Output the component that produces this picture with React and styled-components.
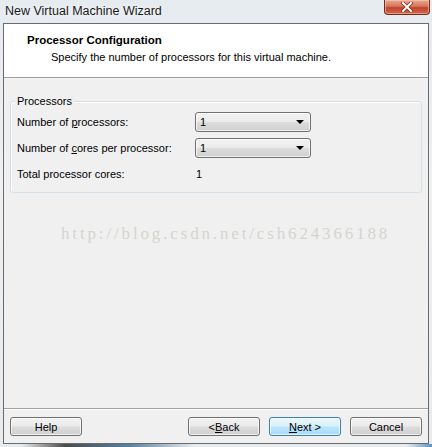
import React from 'react';
import styled, { createGlobalStyle } from 'styled-components';

const GlobalStyle = createGlobalStyle`
  html, body {
    margin: 0;
    padding: 0;
    background: #dfe4ea;
  }
  * {
    box-sizing: border-box;
  }
`;

const App = () => {
  return (
    <>
      <GlobalStyle />
      <Window>
        <TitleBar>
          <Title>New Virtual Machine Wizard</Title>
          <CloseButton aria-label="close">
            <svg width="14" height="10" viewBox="0 0 14 10">
              <path
                d="M3 1 L11 9 M11 1 L3 9"
                stroke="#7a2a1c"
                strokeWidth="3.4"
                strokeLinecap="square"
              />
              <path
                d="M3 1 L11 9 M11 1 L3 9"
                stroke="#ffffff"
                strokeWidth="2"
                strokeLinecap="square"
              />
            </svg>
          </CloseButton>
        </TitleBar>
        <Client>
          <Header>
            <HeaderTitle>Processor Configuration</HeaderTitle>
            <HeaderSub>Specify the number of processors for this virtual machine.</HeaderSub>
          </Header>
          <Body>
            <Group>
              <Legend>Processors</Legend>
              <Row>
                <Label>
                  Number of <u>p</u>rocessors:
                </Label>
                <Select>
                  <span>1</span>
                  <Arrow />
                </Select>
              </Row>
              <Row>
                <Label>
                  Number of <u>c</u>ores per processor:
                </Label>
                <Select>
                  <span>1</span>
                  <Arrow />
                </Select>
              </Row>
              <Row>
                <Label>Total processor cores:</Label>
                <Value>1</Value>
              </Row>
            </Group>
            <Watermark>http://blog.csdn.net/csh624366188</Watermark>
          </Body>
          <Footer>
            <Button>Help</Button>
            <Spacer />
            <Button>
              &lt; <u>B</u>ack
            </Button>
            <Button primary>
              <u>N</u>ext &gt;
            </Button>
            <Button>Cancel</Button>
          </Footer>
        </Client>
        <BottomGlass />
      </Window>
    </>
  );
};

const Window = styled.div`
  width: 432px;
  height: 447px;
  display: flex;
  flex-direction: column;
  padding: 0 3px 0 3px;
  background: linear-gradient(180deg, #e6ebf0 0%, #eef0f2 40%, #e8ebee 100%);
  font-family: 'Liberation Sans', Arial, sans-serif;
  font-size: 11px;
  color: #000;
  overflow: hidden;
`;

const TitleBar = styled.div`
  height: 23px;
  display: flex;
  align-items: flex-start;
  justify-content: space-between;
  flex-shrink: 0;
`;

const Title = styled.div`
  font-size: 12.5px;
  color: #1a1a1a;
  padding: 4px 0 0 2px;
  text-shadow: 0 0 6px #ffffff;
`;

const CloseButton = styled.div`
  width: 46px;
  height: 15px;
  margin-right: -1px;
  display: flex;
  align-items: center;
  justify-content: center;
  border: 1px solid #6e2d22;
  border-top: none;
  border-radius: 0 0 4px 4px;
  background: linear-gradient(180deg, #e9a895 0%, #d6735c 45%, #c2432a 55%, #d1684b 100%);
  box-shadow: inset 0 0 0 1px rgba(255, 210, 190, 0.5);
`;

const Client = styled.div`
  height: 421px;
  display: flex;
  flex-direction: column;
  border: 1px solid #6b6b6b;
  background: #f0f0f0;
  flex-shrink: 0;
`;

const Header = styled.div`
  height: 54px;
  background: #ffffff;
  border-bottom: 1px solid #a0a0a0;
  padding: 9px 0 0 23px;
  flex-shrink: 0;
`;

const HeaderTitle = styled.div`
  font-weight: bold;
  font-size: 11.5px;
  line-height: 14px;
`;

const HeaderSub = styled.div`
  padding-left: 24px;
  margin-top: 3px;
  line-height: 14px;
`;

const Body = styled.div`
  flex: 1;
  padding: 23px 6px 0 6px;
  display: flex;
  flex-direction: column;
`;

const Group = styled.div`
  position: relative;
  height: 92px;
  border: 1px solid #d5dfe5;
  border-radius: 3px;
  box-shadow: inset 1px 1px 0 #ffffff;
  padding: 10px 0 0 6px;
  display: flex;
  flex-direction: column;
  gap: 6px;
`;

const Legend = styled.span`
  position: absolute;
  top: -7px;
  left: 4px;
  padding: 0 2px;
  background: #f0f0f0;
  line-height: 13px;
`;

const Row = styled.div`
  height: 20px;
  display: flex;
  align-items: center;
`;

const Label = styled.div`
  width: 178px;
`;

const Select = styled.div`
  width: 116px;
  height: 20px;
  border: 1px solid #707070;
  border-radius: 3px;
  background: linear-gradient(180deg, #f2f2f2 0%, #ebebeb 48%, #dddddd 52%, #cfcfcf 100%);
  box-shadow: inset 0 0 0 1px rgba(255, 255, 255, 0.7);
  display: flex;
  align-items: center;
  justify-content: space-between;
  padding: 0 6px 0 4px;
`;

const Arrow = styled.span`
  width: 0;
  height: 0;
  border-left: 4px solid transparent;
  border-right: 4px solid transparent;
  border-top: 4px solid #000;
`;

const Value = styled.div`
  padding-left: 1px;
`;

const Watermark = styled.div`
  margin: 31px 0 0 51px;
  font-family: 'Liberation Serif', 'DejaVu Serif', serif;
  font-size: 17px;
  letter-spacing: 2.85px;
  color: #d6d4ce;
  white-space: nowrap;
`;

const Footer = styled.div`
  height: 35px;
  border-top: 1px solid #a0a0a0;
  box-shadow: inset 0 1px 0 #ffffff;
  display: flex;
  align-items: flex-start;
  padding: 8px 6px 0 6px;
  gap: 9px;
  flex-shrink: 0;
`;

const Spacer = styled.div`
  flex: 1;
`;

const Button = styled.div`
  width: 72px;
  height: 19px;
  display: flex;
  align-items: center;
  justify-content: center;
  border: 1px solid ${(p) => (p.primary ? '#3c7fb1' : '#707070')};
  border-radius: 3px;
  background: ${(p) =>
    p.primary
      ? 'linear-gradient(180deg, #eaf6fd 0%, #d9f0fc 48%, #bee6fd 52%, #a7d9f5 100%)'
      : 'linear-gradient(180deg, #f2f2f2 0%, #ebebeb 48%, #dddddd 52%, #cfcfcf 100%)'};
  box-shadow: inset 0 0 0 1px rgba(255, 255, 255, 0.7);
`;

const BottomGlass = styled.div`
  flex: 1;
  margin: 0 -3px;
  background: linear-gradient(
    90deg,
    #e8ebee 0%,
    #e8ebee 5%,
    #2e2e2e 15%,
    #3b6f96 30%,
    #e8ebee 45%,
    #e8ebee 94%,
    #3f86bd 100%
  );
  opacity: 0.85;
`;

export default App;
